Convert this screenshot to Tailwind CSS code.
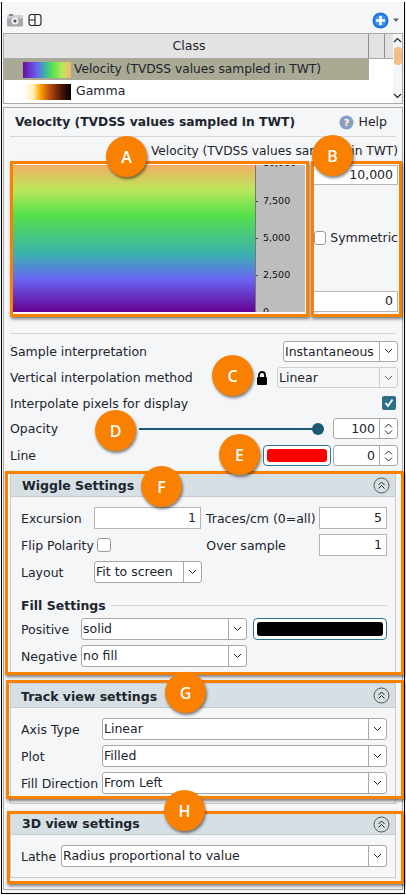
<!DOCTYPE html>
<html lang="en">
  <head>
    <meta charset="UTF-8" />
    <title>Layer settings</title>
    <script src="https://cdn.jsdelivr.net/npm/@tailwindcss/browser@4"></script>
  </head>
  <body class="bg-white">
    <div class="relative w-[406px] h-[895px] overflow-hidden bg-[#f5f6f8] font-['DejaVu_Sans',sans-serif] text-[12.5px] text-[#20242c] border-t-2 border-t-white">
      <!-- toolbar -->
      <div class="flex items-center h-[31px] pl-[7px] pr-[5px] pt-[5px]">
        <svg width="17" height="13" viewBox="0 0 17 13"><rect x="0" y="1.500" width="16" height="11" rx="1" fill="#a9a9a9"/><rect x="0" y="1.500" width="16" height="3" fill="#cfcfcf"/><rect x="2" y="0" width="4" height="2" fill="#888"/><circle cx="8" cy="7" r="3.500" fill="#eee"/><circle cx="8" cy="7" r="1.500" fill="#3d4f73"/></svg>
        <svg class="ml-[4px]" width="14" height="14" viewBox="0 0 14 14" fill="none" stroke="#222" stroke-width="1.100"><rect x="1" y="1.500" width="12" height="11" rx="2.500"/><path d="M7 1.500V12.500M1 7H7"/></svg>
        <svg class="ml-auto" width="17" height="17" viewBox="0 0 17 17"><circle cx="8.500" cy="8.500" r="8" fill="#1f6fdc"/><circle cx="8.500" cy="8.500" r="6" fill="#3f93f2"/><path d="M8.500 4V13M4 8.500H13" stroke="#fff" stroke-width="2.600"/></svg>
        <svg class="ml-[3px] mr-[1px]" width="8" height="6" viewBox="0 0 8 6"><path d="M1 1.500H7L4 5Z" fill="#666"/></svg>
      </div>

      <!-- class table -->
      <div class="mx-[3px] h-[71px] border border-[#a8a8a8] bg-white flex">
        <div class="w-[389px] shrink-0">
          <div class="flex h-[25px] bg-[#e3e3e3] border-b border-[#a8a8a8]">
            <div class="w-[365px] flex items-center justify-center pl-[6px] pt-[1px] border-r border-[#8f8f8f]">Class</div>
            <div class="w-[16px] border-r border-[#8f8f8f]"></div>
          </div>
          <div class="flex items-center h-[21px] w-[365px] bg-[#a9a994] pl-[19px]">
            <div class="w-[48px] h-[16px] bg-[linear-gradient(to_right,#6a0aa0,#6a60f0_28%,#3ab0b0_45%,#5ae24a_62%,#bce85c_82%,#f6b46e)]"></div>
            <span class="ml-[3px] text-[12.2px]">Velocity (TVDSS values sampled in TWT)</span>
          </div>
          <div class="flex items-center h-[23px] pl-[20px]">
            <div class="w-[47px] h-[16px] bg-[linear-gradient(to_right,#ffffff,#ffeeb0_20%,#ffa000_35%,#b84a10_55%,#4a1505_80%,#000000)]"></div>
            <span class="ml-[5px]">Gamma</span>
          </div>
        </div>
        <div class="flex-1 flex flex-col items-center relative bg-[#f5f6f8]">
          <svg class="mt-[3px]" width="9" height="6" viewBox="0 0 9 6" fill="none" stroke="#222" stroke-width="1.200"><path d="M1 5L4.500 1.500L8 5"/></svg>
          <div class="w-[8px] h-[18px] mt-[4px] rounded-full bg-[#f6bd83]"></div>
          <svg class="mt-auto mb-[4px]" width="9" height="6" viewBox="0 0 9 6" fill="none" stroke="#222" stroke-width="1.200"><path d="M1 1L4.500 4.500L8 1"/></svg>
        </div>
      </div>

      <!-- settings panel -->
      <div class="mt-[3px] mx-[3px] h-[783px] border border-[#a8a8a8]">
        <div class="flex items-center h-[29px] mx-[6px] pl-[5px] pr-[9px] pt-[1px] border-b border-[#d4d6d9]">
          <span class="font-bold text-[12.3px]">Velocity (TVDSS values sampled in TWT)</span>
          <svg class="ml-auto" width="15" height="15" viewBox="0 0 15 15"><circle cx="7.500" cy="7.500" r="7" fill="#7d9fd2"/><circle cx="7.500" cy="7.500" r="4.500" fill="#9a9fa8"/><text x="7.500" y="11" text-anchor="middle" font-size="9" font-weight="bold" fill="#fff">?</text></svg>
          <span class="ml-[5px]">Help</span>
        </div>
        <div class="text-right text-[12.2px] pr-[4px] h-[28px] pt-[5px]">Velocity (TVDSS values sampled in TWT)</div>
        <!-- colour bar and range -->
        <div class="flex h-[147px] ml-[9px] mr-[3px]">
          <div class="w-[243px] h-full bg-[linear-gradient(to_bottom,#f2ae64,#bce85c_17%,#55e04a_34%,#3ab0b0_61%,#6a64f4_78%,#640090)] border-r border-[#777]"></div>
          <div class="w-[49px] h-full bg-[#bdbdbd] relative text-[9.5px] text-[#111] overflow-hidden">
            <span class="absolute left-[7px] top-[-9px]">10,000</span>
            <span class="absolute left-[7px] top-[29px]">7,500</span>
            <span class="absolute left-[7px] top-[66px]">5,000</span>
            <span class="absolute left-[7px] top-[103px]">2,500</span>
            <span class="absolute left-[7px] top-[140px]">0</span>
            <span class="absolute left-0 top-[36px] w-[2px] h-px bg-[#444]"></span>
            <span class="absolute left-0 top-[73px] w-[2px] h-px bg-[#444]"></span>
            <span class="absolute left-0 top-[110px] w-[2px] h-px bg-[#444]"></span>
          </div>
          <div class="ml-[8px] w-[85px] flex flex-col">
            <div class="h-[20px] bg-white border border-[#b5b5b5] text-right pr-[4px]">10,000</div>
            <div class="flex-1 flex items-center pl-[1px]">
              <span class="w-[14px] h-[14px] rounded-[3px] bg-white border border-[#9a9a9a]"></span>
              <span class="ml-[4px]">Symmetric</span>
            </div>
            <div class="h-[21px] bg-white border border-[#b5b5b5] text-right pr-[4px]">0</div>
          </div>
        </div>
        <div class="mx-[6px] mt-[21px] border-t border-[#d4d6d9]"></div>

        <!-- display rows -->
        <div class="flex items-center justify-between h-[20px] mt-[7px] pl-[6px] pr-[4px]">
          <span class="pt-[2px]">Sample interpretation</span>
          <div class="flex w-[115px] h-[21px] bg-white border border-[#a8a8a8] rounded-[3px]">
            <span class="flex-1 pl-[1px] leading-[19px] border-r border-[#a8a8a8]">Instantaneous</span>
            <span class="w-[17px] flex items-center justify-center"><svg width="9" height="6" viewBox="0 0 9 6" fill="none" stroke="#222"><path d="M1 1L4.500 4.500L8 1"/></svg></span>
          </div>
        </div>
        <div class="flex items-center h-[21px] mt-[6px] pl-[6px] pr-[4px]">
          <span class="pt-[2px]">Vertical interpolation method</span>
          <svg class="ml-auto mr-[9px]" width="12" height="14" viewBox="0 0 12 14"><rect x="1" y="6" width="10" height="8" rx="1" fill="#000"/><path d="M3 6.500V4a3 3 0 0 1 6 0V6.500" fill="none" stroke="#000" stroke-width="1.800"/></svg>
          <div class="flex w-[121px] h-[21px] bg-[#f5f6f8] border border-[#cfcfcf] rounded-[3px]">
            <span class="flex-1 pl-[1px] leading-[19px] border-r border-[#cfcfcf]">Linear</span>
            <span class="w-[17px] flex items-center justify-center"><svg width="9" height="6" viewBox="0 0 9 6" fill="none" stroke="#666"><path d="M1 1L4.500 4.500L8 1"/></svg></span>
          </div>
        </div>
        <div class="flex items-center h-[16px] mt-[7px] pl-[6px] pr-[6px]">
          <span class="pt-[2px]">Interpolate pixels for display</span>
          <span class="ml-auto w-[14px] h-[14px] rounded-[2px] bg-[#2f6f86] flex items-center justify-center">
            <svg width="10" height="10" viewBox="0 0 10 10" fill="none" stroke="#fff" stroke-width="1.800"><path d="M1.500 5L4 8L8.500 1.500"/></svg>
          </span>
        </div>
        <div class="flex items-center h-[21px] mt-[7px] pl-[6px] pr-[4px]">
          <span class="w-[129px] pt-[2px]">Opacity</span>
          <div class="relative w-[185px] h-[2px] bg-[#1b5a72]">
            <span class="absolute right-0 top-[-5px] w-[12px] h-[12px] rounded-full bg-[#1b5a72]"></span>
          </div>
          <div class="ml-auto flex w-[65px] h-[21px] bg-white border border-[#a8a8a8] rounded-[3px]">
            <span class="flex-1 text-right pr-[4px] leading-[19px] border-r border-[#a8a8a8]">100</span>
            <span class="w-[17px] flex flex-col items-center justify-center gap-[2px]">
              <svg width="9" height="5" viewBox="0 0 9 5" fill="none" stroke="#222"><path d="M1 4.500L4.500 1L8 4.500"/></svg>
              <svg width="9" height="5" viewBox="0 0 9 5" fill="none" stroke="#222"><path d="M1 .5L4.500 4L8 .5"/></svg>
            </span>
          </div>
        </div>
        <div class="flex items-center h-[21px] mt-[6px] pl-[6px] pr-[4px]">
          <span class="pt-[2px]">Line</span>
          <div class="ml-auto w-[68px] h-[21px] p-[3px] bg-white border border-[#2d7690] rounded-[4px]">
            <div class="h-full bg-[#ff0000] rounded-[3px]"></div>
          </div>
          <div class="ml-[2px] flex w-[65px] h-[21px] bg-white border border-[#a8a8a8] rounded-[3px]">
            <span class="flex-1 text-right pr-[4px] leading-[19px] border-r border-[#a8a8a8]">0</span>
            <span class="w-[17px] flex flex-col items-center justify-center gap-[2px]">
              <svg width="9" height="5" viewBox="0 0 9 5" fill="none" stroke="#222"><path d="M1 4.500L4.500 1L8 4.500"/></svg>
              <svg width="9" height="5" viewBox="0 0 9 5" fill="none" stroke="#222"><path d="M1 .5L4.500 4L8 .5"/></svg>
            </span>
          </div>
        </div>

        <!-- wiggle settings -->
        <div class="mt-[7px] mx-[6px] h-[200px] border border-[#c9cbce]">
          <div class="flex items-center h-[23px] bg-[#d5dfe4] pl-[11px] pr-[5px] border-b border-[#c9cbce]">
            <span class="font-bold text-[12.5px] pt-[2px]">Wiggle Settings</span>
            <svg class="ml-auto" width="17" height="17" viewBox="0 0 17 17" fill="none" stroke="#555"><circle cx="8.500" cy="8.500" r="7.500"/><path d="M5.500 8L8.500 5L11.500 8M5.500 11.500L8.500 8.500L11.500 11.500" stroke="#222"/></svg>
          </div>
          <div class="pl-[10px] pr-[8px]">
            <div class="flex items-center h-[22px] mt-[10px]">
              <span class="w-[73px] pt-[2px]">Excursion</span>
              <div class="w-[108px] h-[22px] bg-white border border-[#b5b5b5] text-right pr-[4px] leading-[20px]">1</div>
              <span class="ml-[5px] w-[112px] pt-[2px] whitespace-nowrap">Traces/cm (0=all)</span>
              <div class="ml-[2px] w-[68px] h-[22px] bg-white border border-[#b5b5b5] text-right pr-[4px] leading-[20px]">5</div>
            </div>
            <div class="flex items-center h-[22px] mt-[5px]">
              <span class="w-[77px] pt-[2px]">Flip Polarity</span>
              <span class="w-[14px] h-[14px] rounded-[3px] bg-white border border-[#9a9a9a]"></span>
              <span class="ml-[95px] w-[114px] pt-[2px]">Over sample</span>
              <div class="w-[68px] h-[22px] bg-white border border-[#b5b5b5] text-right pr-[4px] leading-[20px]">1</div>
            </div>
            <div class="flex items-center h-[22px] mt-[5px]">
              <span class="w-[73px] pt-[2px]">Layout</span>
              <div class="flex w-[108px] h-[22px] bg-white border border-[#a8a8a8] rounded-[3px]">
                <span class="flex-1 pl-[1px] leading-[20px] border-r border-[#a8a8a8]">Fit to screen</span>
                <span class="w-[17px] flex items-center justify-center"><svg width="9" height="6" viewBox="0 0 9 6" fill="none" stroke="#222"><path d="M1 1L4.500 4.500L8 1"/></svg></span>
              </div>
            </div>
            <div class="flex items-center h-[16px] mt-[14px]">
              <span class="font-bold pt-[2px]">Fill Settings</span>
              <span class="ml-[5px] flex-1 border-t border-[#d4d6d9]"></span>
            </div>
            <div class="flex items-center h-[22px] mt-[5px]">
              <span class="w-[60px] pt-[2px]">Positive</span>
              <div class="flex w-[166px] h-[22px] bg-white border border-[#a8a8a8] rounded-[3px]">
                <span class="flex-1 pl-[1px] leading-[20px] border-r border-[#a8a8a8]">solid</span>
                <span class="w-[17px] flex items-center justify-center"><svg width="9" height="6" viewBox="0 0 9 6" fill="none" stroke="#222"><path d="M1 1L4.500 4.500L8 1"/></svg></span>
              </div>
              <div class="ml-[6px] flex-1 h-[22px] p-[3px] bg-white border border-[#2d7690] rounded-[4px]">
                <div class="h-full bg-black rounded-[3px]"></div>
              </div>
            </div>
            <div class="flex items-center h-[22px] mt-[5px]">
              <span class="w-[60px] pt-[2px]">Negative</span>
              <div class="flex w-[166px] h-[22px] bg-white border border-[#a8a8a8] rounded-[3px]">
                <span class="flex-1 pl-[1px] leading-[20px] border-r border-[#a8a8a8]">no fill</span>
                <span class="w-[17px] flex items-center justify-center"><svg width="9" height="6" viewBox="0 0 9 6" fill="none" stroke="#222"><path d="M1 1L4.500 4.500L8 1"/></svg></span>
              </div>
            </div>
          </div>
        </div>

        <!-- track view -->
        <div class="mt-[10px] mx-[6px] h-[121px] border border-[#c9cbce]">
          <div class="flex items-center h-[24px] bg-[#d5dfe4] pl-[10px] pr-[5px] border-b border-[#c9cbce]">
            <span class="font-bold text-[12.5px] pt-[3px]">Track view settings</span>
            <svg class="ml-auto" width="17" height="17" viewBox="0 0 17 17" fill="none" stroke="#555"><circle cx="8.500" cy="8.500" r="7.500"/><path d="M5.500 8L8.500 5L11.500 8M5.500 11.500L8.500 8.500L11.500 11.500" stroke="#222"/></svg>
          </div>
          <div class="pl-[10px] pr-[8px]">
            <div class="flex items-center h-[22px] mt-[10px]">
              <span class="w-[81px] pt-[2px]">Axis Type</span>
              <div class="flex flex-1 h-[22px] bg-white border border-[#a8a8a8] rounded-[3px]">
                <span class="flex-1 pl-[1px] leading-[20px] border-r border-[#a8a8a8]">Linear</span>
                <span class="w-[17px] flex items-center justify-center"><svg width="9" height="6" viewBox="0 0 9 6" fill="none" stroke="#222"><path d="M1 1L4.500 4.500L8 1"/></svg></span>
              </div>
            </div>
            <div class="flex items-center h-[22px] mt-[5px]">
              <span class="w-[81px] pt-[2px]">Plot</span>
              <div class="flex flex-1 h-[22px] bg-white border border-[#a8a8a8] rounded-[3px]">
                <span class="flex-1 pl-[1px] leading-[20px] border-r border-[#a8a8a8]">Filled</span>
                <span class="w-[17px] flex items-center justify-center"><svg width="9" height="6" viewBox="0 0 9 6" fill="none" stroke="#222"><path d="M1 1L4.500 4.500L8 1"/></svg></span>
              </div>
            </div>
            <div class="flex items-center h-[22px] mt-[5px]">
              <span class="w-[81px] pt-[2px] whitespace-nowrap">Fill Direction</span>
              <div class="flex flex-1 h-[22px] bg-white border border-[#a8a8a8] rounded-[3px]">
                <span class="flex-1 pl-[1px] leading-[20px] border-r border-[#a8a8a8]">From Left</span>
                <span class="w-[17px] flex items-center justify-center"><svg width="9" height="6" viewBox="0 0 9 6" fill="none" stroke="#222"><path d="M1 1L4.500 4.500L8 1"/></svg></span>
              </div>
            </div>
          </div>
        </div>

        <!-- 3d view -->
        <div class="mt-[9px] mx-[6px] h-[65px] border border-[#c9cbce]">
          <div class="flex items-center h-[21px] bg-[#d5dfe4] pl-[11px] pr-[5px] border-b border-[#c9cbce]">
            <span class="font-bold text-[12.5px]">3D view settings</span>
            <svg class="ml-auto" width="17" height="17" viewBox="0 0 17 17" fill="none" stroke="#555"><circle cx="8.500" cy="8.500" r="7.500"/><path d="M5.500 8L8.500 5L11.500 8M5.500 11.500L8.500 8.500L11.500 11.500" stroke="#222"/></svg>
          </div>
          <div class="flex items-center h-[22px] mt-[10px] pl-[10px] pr-[8px]">
            <span class="w-[40px] pt-[2px]">Lathe</span>
            <div class="flex flex-1 h-[22px] bg-white border border-[#a8a8a8] rounded-[3px]">
              <span class="flex-1 pl-[1px] leading-[20px] border-r border-[#a8a8a8]">Radius proportional to value</span>
              <span class="w-[17px] flex items-center justify-center"><svg width="9" height="6" viewBox="0 0 9 6" fill="none" stroke="#222"><path d="M1 1L4.500 4.500L8 1"/></svg></span>
            </div>
          </div>
        </div>
      </div>

      <!-- window frame -->
      <div class="absolute left-[1px] top-[-1px] w-[404px] h-[893px] border border-black pointer-events-none"></div>

      <!-- annotation boxes over the screenshot -->
      <div class="absolute left-[10px] top-[159px] w-[299px] h-[156px] border-[3px] border-[#f98000] shadow-[1px_2px_3px_rgba(0,0,0,0.5)]"></div>
      <div class="absolute left-[311px] top-[159px] w-[91px] h-[156px] border-[3px] border-[#f98000] shadow-[1px_2px_3px_rgba(0,0,0,0.5)]"></div>
      <div class="absolute left-[5px] top-[469px] w-[399px] h-[204px] border-[3px] border-[#f98000] shadow-[1px_2px_3px_rgba(0,0,0,0.5)]"></div>
      <div class="absolute left-[6px] top-[678px] w-[398px] h-[119px] border-[3px] border-[#f98000] shadow-[1px_2px_3px_rgba(0,0,0,0.5)]"></div>
      <div class="absolute left-[7px] top-[809px] w-[397px] h-[73px] border-[3px] border-[#f98000] shadow-[1px_2px_3px_rgba(0,0,0,0.5)]"></div>

      <!-- callouts -->
      <div class="absolute left-[106px] top-[134px] w-[41px] h-[41px] rounded-full bg-[#f98000] text-white font-['Open_Sans',sans-serif] font-semibold text-[16px] flex items-center justify-center shadow-[1px_2px_3px_rgba(0,0,0,0.5)]">A</div>
      <div class="absolute left-[312px] top-[133px] w-[41px] h-[41px] rounded-full bg-[#f98000] text-white font-['Open_Sans',sans-serif] font-semibold text-[16px] flex items-center justify-center shadow-[1px_2px_3px_rgba(0,0,0,0.5)]">B</div>
      <div class="absolute left-[212px] top-[353px] w-[41px] h-[41px] rounded-full bg-[#f98000] text-white font-['Open_Sans',sans-serif] font-semibold text-[16px] flex items-center justify-center shadow-[1px_2px_3px_rgba(0,0,0,0.5)]">C</div>
      <div class="absolute left-[95px] top-[408px] w-[41px] h-[41px] rounded-full bg-[#f98000] text-white font-['Open_Sans',sans-serif] font-semibold text-[16px] flex items-center justify-center shadow-[1px_2px_3px_rgba(0,0,0,0.5)]">D</div>
      <div class="absolute left-[219px] top-[432px] w-[41px] h-[41px] rounded-full bg-[#f98000] text-white font-['Open_Sans',sans-serif] font-semibold text-[16px] flex items-center justify-center shadow-[1px_2px_3px_rgba(0,0,0,0.5)]">E</div>
      <div class="absolute left-[141px] top-[464px] w-[41px] h-[41px] rounded-full bg-[#f98000] text-white font-['Open_Sans',sans-serif] font-semibold text-[16px] flex items-center justify-center shadow-[1px_2px_3px_rgba(0,0,0,0.5)]">F</div>
      <div class="absolute left-[165px] top-[670px] w-[41px] h-[41px] rounded-full bg-[#f98000] text-white font-['Open_Sans',sans-serif] font-semibold text-[16px] flex items-center justify-center shadow-[1px_2px_3px_rgba(0,0,0,0.5)]">G</div>
      <div class="absolute left-[164px] top-[788px] w-[41px] h-[41px] rounded-full bg-[#f98000] text-white font-['Open_Sans',sans-serif] font-semibold text-[16px] flex items-center justify-center shadow-[1px_2px_3px_rgba(0,0,0,0.5)]">H</div>
    </div>
  </body>
</html>
